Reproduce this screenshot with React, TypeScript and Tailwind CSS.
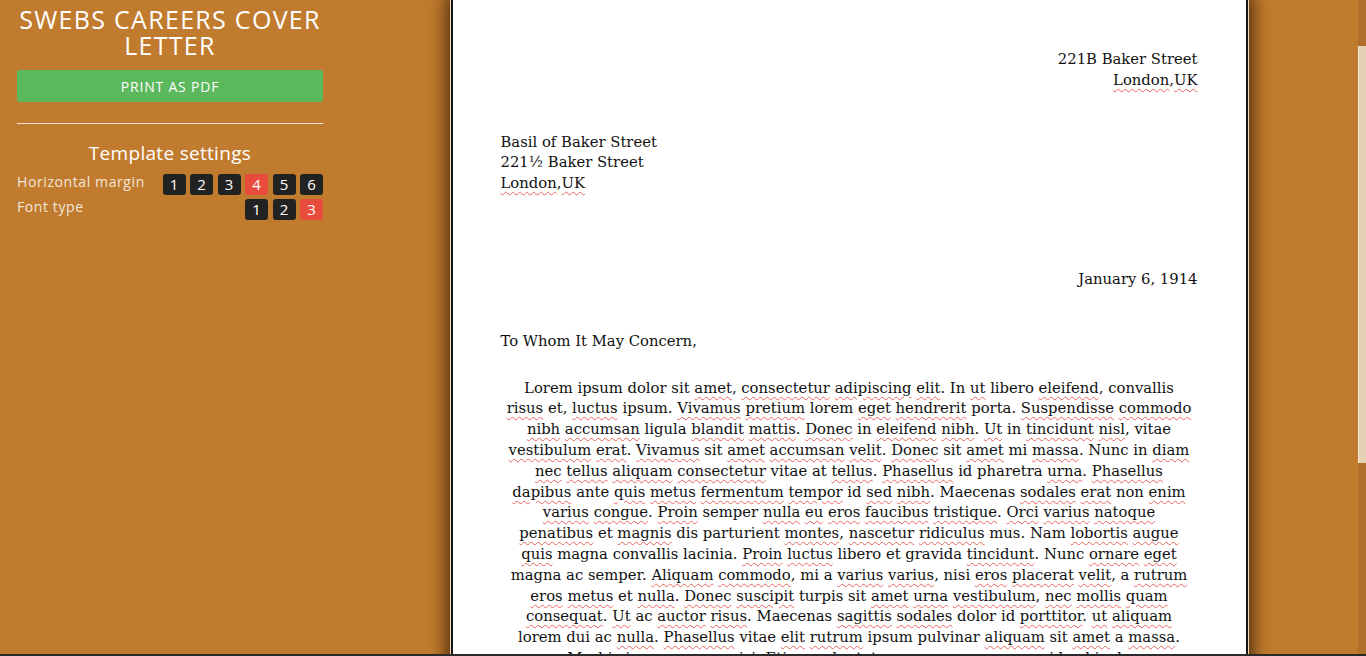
const typos = new Set([
  "amet", "consectetur", "adipiscing", "elit", "ut", "Ut", "eleifend", "risus", "luctus",
  "Vivamus", "pretium", "eget", "hendrerit", "Suspendisse", "commodo", "nibh", "accumsan",
  "blandit", "mattis", "Donec", "tincidunt", "nisl", "vestibulum", "erat", "velit", "massa",
  "diam", "nec", "tellus", "aliquam", "urna", "Phasellus", "dapibus", "quis", "metus",
  "fermentum", "tempor", "sed", "sodales", "enim", "varius", "congue", "Proin", "nulla", "eu",
  "eros", "faucibus", "tristique", "Orci", "natoque", "penatibus", "magnis", "montes",
  "nascetur", "ridiculus", "lobortis", "augue", "ornare", "Aliquam", "placerat", "rutrum",
  "suscipit", "mollis", "quam", "consequat", "auctor", "sagittis", "porttitor", "Morbi",
]);

const lines = [
  "Lorem ipsum dolor sit amet, consectetur adipiscing elit. In ut libero eleifend, convallis",
  "risus et, luctus ipsum. Vivamus pretium lorem eget hendrerit porta. Suspendisse commodo",
  "nibh accumsan ligula blandit mattis. Donec in eleifend nibh. Ut in tincidunt nisl, vitae",
  "vestibulum erat. Vivamus sit amet accumsan velit. Donec sit amet mi massa. Nunc in diam",
  "nec tellus aliquam consectetur vitae at tellus. Phasellus id pharetra urna. Phasellus",
  "dapibus ante quis metus fermentum tempor id sed nibh. Maecenas sodales erat non enim",
  "varius congue. Proin semper nulla eu eros faucibus tristique. Orci varius natoque",
  "penatibus et magnis dis parturient montes, nascetur ridiculus mus. Nam lobortis augue",
  "quis magna convallis lacinia. Proin luctus libero et gravida tincidunt. Nunc ornare eget",
  "magna ac semper. Aliquam commodo, mi a varius varius, nisi eros placerat velit, a rutrum",
  "eros metus et nulla. Donec suscipit turpis sit amet urna vestibulum, nec mollis quam",
  "consequat. Ut ac auctor risus. Maecenas sagittis sodales dolor id porttitor. ut aliquam",
  "lorem dui ac nulla. Phasellus vitae elit rutrum ipsum pulvinar aliquam sit amet a massa.",
  "Morbi viverra cursus nisi. Etiam vulputate urna a nunc congue, id vehicula",
];

const Squiggle = ({ children }: { children: string }) => (
  <span className="underline decoration-wavy decoration-[#e8675e] decoration-1 underline-offset-[3px]">
    {children}
  </span>
);

const Line = ({ text }: { text: string }) => (
  <div>
    {text.split(" ").map((tok, i) => {
      const m = tok.match(/^([A-Za-z]+)(.*)$/);
      const word = m ? m[1] : tok;
      const rest = m ? m[2] : "";
      return (
        <span key={i}>
          {i > 0 && " "}
          {typos.has(word) ? <Squiggle>{word}</Squiggle> : word}
          {rest}
        </span>
      );
    })}
  </div>
);

const Pick = ({ n, active }: { n: number; active?: boolean }) => (
  <span
    className={
      "inline-flex h-[21px] w-[23px] items-center justify-center rounded-[3px] text-[15px] text-white " +
      (active ? "bg-[#e74c3c]" : "bg-[#222222]")
    }
  >
    {n}
  </span>
);

const Sidebar = () => (
  <div
    className="w-[340px] shrink-0 px-[17px] pt-[6px] text-white"
    style={{ fontFamily: "'Open Sans', Lato, sans-serif" }}
  >
    <h1 className="text-center text-[25px] leading-[26px] font-normal tracking-[1.3px]">
      SWEBS CAREERS COVER LETTER
    </h1>
    <button className="mt-3 h-[32px] w-full rounded-[3px] bg-[#5cb85c] text-[14px] tracking-[0.8px] text-white">
      PRINT AS PDF
    </button>
    <hr className="mt-[21px] border-t border-[#f3e6d6]" />
    <h2 className="mt-[17px] text-center text-[19px] leading-6 tracking-[0.3px]">Template settings</h2>
    <div className="mt-[9px] flex items-start justify-between text-[14px] text-[#f1e6da]">
      <span className="leading-[16px] tracking-[0.6px]">Horizontal margin</span>
      <div className="flex gap-[4.5px]">
        <Pick n={1} />
        <Pick n={2} />
        <Pick n={3} />
        <Pick n={4} active />
        <Pick n={5} />
        <Pick n={6} />
      </div>
    </div>
    <div className="mt-[4px] flex items-start justify-between text-[14px] text-[#f1e6da]">
      <span className="leading-[16px] tracking-[0.6px]">Font type</span>
      <div className="flex gap-[4.5px]">
        <Pick n={1} />
        <Pick n={2} />
        <Pick n={3} active />
      </div>
    </div>
  </div>
);

const Letter = () => (
  <div
    className="relative h-[700px] w-[797px] border-x-2 border-[#151515] bg-white px-[48px] pt-[49px] text-[14.8px] leading-[20.8px] text-[#111] shadow-[0_0_16px_5px_rgba(40,20,0,0.75)] outline outline-1 outline-[#f0d9bd]"
    style={{ fontFamily: "'DejaVu Serif', 'Liberation Serif', serif" }}
  >
    <div className="text-right">
      <div>221B Baker Street</div>
      <div>
        <Squiggle>London</Squiggle>,<Squiggle>UK</Squiggle>
      </div>
    </div>
    <div className="mt-[41px]">
      <div>Basil of Baker Street</div>
      <div>221½ Baker Street</div>
      <div>
        <Squiggle>London</Squiggle>,<Squiggle>UK</Squiggle>
      </div>
    </div>
    <div className="mt-[75px] text-right">January 6, 1914</div>
    <div className="mt-[41px]">To Whom It May Concern,</div>
    <div className="mt-[26px] text-center">
      {lines.map((l, i) => (
        <Line key={i} text={l} />
      ))}
    </div>
  </div>
);

export default function App() {
  return (
    <div className="flex h-[656px] flex-col overflow-hidden bg-[#c17b2f]">
      <div className="flex h-[654px] overflow-hidden">
        <Sidebar />
        <div className="flex flex-1 justify-center">
          <Letter />
        </div>
        <div className="flex w-[8px] shrink-0 flex-col bg-[#b06f2a]">
          <div className="h-[46px]" />
          <div className="h-[417px] border-l border-[#f3e7d8] bg-[#e6d1b5]" />
        </div>
      </div>
      <div className="h-[2px] bg-[#2b2b2b]" />
    </div>
  );
}
